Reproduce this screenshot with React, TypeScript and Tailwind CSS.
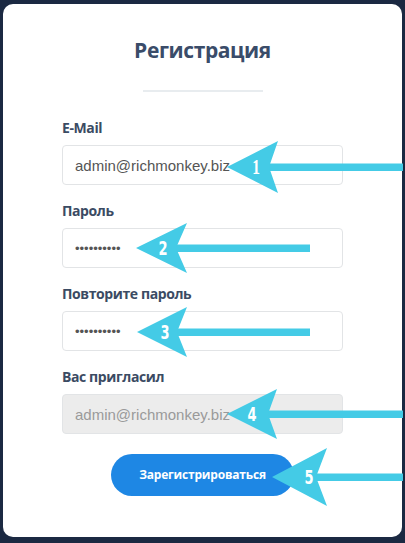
import React from 'react';

const font = { fontFamily: '"Open Sans", "Noto Sans", sans-serif' };

interface FieldProps {
  label: string;
  value: string;
  type?: string;
  disabled?: boolean;
  first?: boolean;
}

function Field({ label, value, type = 'text', disabled, first }: FieldProps) {
  return (
    <div className={`flex flex-col ${first ? '' : 'mt-[16px]'}`}>
      <label className="h-[20px] text-[14px] leading-[20px] font-bold tracking-[-0.4px] text-[#3b4b63] mb-[7px]">
        {label}
      </label>
      <input
        readOnly
        type={type}
        value={value}
        disabled={disabled}
        className={`h-[40px] w-full rounded-[4px] border border-[#e2e4e6] px-[12px] outline-none ${
          type === 'password' ? 'text-[13px] text-[#555]' : 'text-[15px]'
        } ${disabled ? 'bg-[#ececec] text-[#9a9a9a]' : 'bg-white text-[#555]'}`}
        style={{ fontFamily: '"Liberation Sans", Arial, sans-serif' }}
      />
    </div>
  );
}

interface ArrowProps {
  tip: number;
  y: number;
  back: number;
  notch: number;
  end: number;
  half: number;
  digit: string;
  dx: number;
  serif?: boolean;
}

function Arrow({ tip, y, back, notch, end, half, digit, dx, serif }: ArrowProps) {
  return (
    <g>
      <rect x={notch - 2} y={y - 3.5} width={end - notch + 2} height={7.5} fill="#44cbe6" />
      <polygon points={`${tip},${y} ${back},${y - half} ${notch},${y} ${back},${y + half}`} fill="#44cbe6" />
      <text
        transform={`translate(${dx} ${y + 7}) scale(0.85 1.15)`}
        textAnchor="middle"
        fill="#fff"
        fontSize={serif ? 18 : 17}
        fontWeight={700}
        fontFamily={serif ? '"Liberation Serif", serif' : '"DejaVu Sans Condensed", "DejaVu Sans", sans-serif'}
      >
        {digit}
      </text>
    </g>
  );
}

export default function App() {
  return (
    <div className="relative w-[405px] h-[543px] overflow-hidden bg-[#1b2942] pt-[4px] pl-[3px]" style={font}>
      <div className="w-[399px] h-[533px] rounded-[10px] bg-white pt-[33px]">
        <h1 className="text-center text-[21px] leading-[26px] font-bold tracking-[-0.4px] text-[#3a4c69]">
          Регистрация
        </h1>
        <div className="mx-auto mt-[27px] h-[2px] w-[120px] bg-[#e8ecef]" />
        <div className="mx-[59px] mt-[26px] flex flex-col">
          <Field first label="E-Mail" value="admin@richmonkey.biz" />
          <Field label="Пароль" value="1234567890" type="password" />
          <Field label="Повторите пароль" value="1234567890" type="password" />
          <Field label="Вас пригласил" value="admin@richmonkey.biz" disabled />
          <button className="mx-auto mt-[20px] h-[42px] w-[183px] rounded-full bg-[#1e87e4] text-[12px] font-bold tracking-[-0.2px] text-white">
            Зарегистрироваться
          </button>
        </div>
      </div>
      <svg className="pointer-events-none absolute left-0 top-0" width={405} height={543}>
        <Arrow tip={227} y={167} back={278} notch={269} end={403} half={26} digit="1" dx={256} serif />
        <Arrow tip={136} y={248} back={187} notch={176} end={310} half={25} digit="2" dx={163} />
        <Arrow tip={137} y={332} back={187} notch={177} end={310} half={25} digit="3" dx={165} />
        <Arrow tip={227} y={414} back={277} notch={268} end={403} half={25} digit="4" dx={252} />
        <Arrow tip={272} y={477} back={327} notch={316} end={403} half={29} digit="5" dx={309} />
      </svg>
    </div>
  );
}
